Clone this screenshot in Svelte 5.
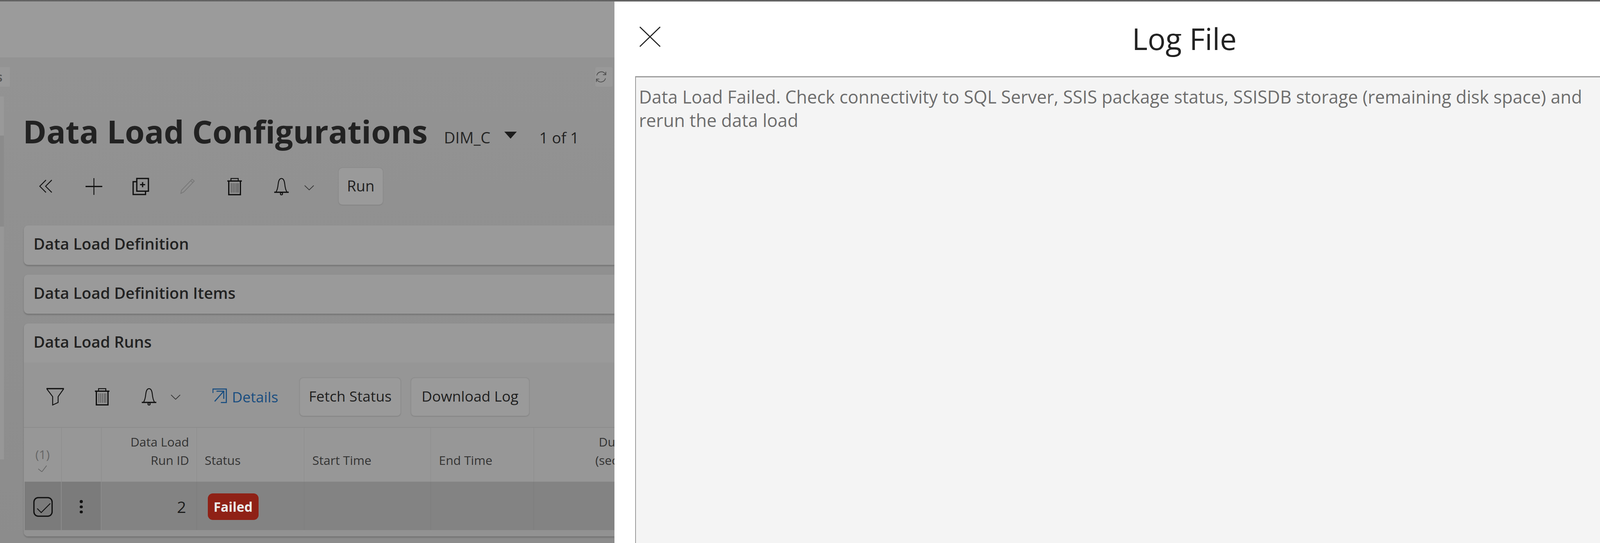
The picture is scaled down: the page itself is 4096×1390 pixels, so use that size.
<script>
  const headers = [
    { lines: ['Data Load', 'Run ID'], align: 'right' },
    { lines: ['Status'], align: 'left' },
    { lines: ['Start Time'], align: 'left' },
    { lines: ['End Time'], align: 'left' },
    { lines: ['Duration', '(seconds)'], align: 'right' }
  ];
</script>

{#snippet trash()}
  <svg class="ico" width="42" height="48" viewBox="0 0 42 48">
    <path class="thin" d="M11 8V2h20v6" />
    <path d="M1 9h40" />
    <path d="M5 9v37.5h32V9" />
    <path class="stripes" d="M12 15v26M17 15v26M22 15v26M27 15v26M31 15v26" />
  </svg>
{/snippet}

{#snippet bell()}
  <svg class="ico" width="42" height="48" viewBox="0 0 42 48">
    <path class="thin" d="M6 39c4-6 5-12 6-22 1-9 4-15 9-15s8 6 9 15c1 10 2 16 6 22" />
    <path d="M1 40h40" />
    <circle class="thin" cx="21" cy="44" r="3" />
  </svg>
{/snippet}

{#snippet chev()}
  <svg class="chev" width="27" height="14" viewBox="0 0 27 14"><path d="M1 1l12.5 12L26 1" /></svg>
{/snippet}

<div class="screen">
  <div class="topline"></div>
  <div class="main">
    <div class="left">
      <div class="band"></div>
      <div class="work">
        <div class="stubs">
          <div class="stub stub-l"><span>s</span></div>
          <div class="stub stub-r">
            <svg width="32" height="34" viewBox="0 0 32 34">
              <path d="M4 13a13 13 0 0 1 22-6l3 4M28 21a13 13 0 0 1-22 6l-3-4" />
              <path d="M29 3v8h-8M3 31v-8h8" />
            </svg>
          </div>
        </div>
        <div class="lower">
          <div class="rail"><i class="r1"></i><i class="r2"></i><i class="r3"></i></div>
          <div class="content">
            <div class="title-row">
              <h1>Data Load Configurations</h1>
              <span class="dim">DIM_C</span>
              <span class="caret"></span>
              <span class="count">1 of 1</span>
            </div>
            <div class="toolbar">
              <div class="tool first-tool">
                <svg class="ico" width="36" height="36" viewBox="0 0 36 36"><path class="thin" d="M19 1L2 18l17 17M35 1L18 18l17 17" /></svg>
              </div>
              <div class="tool">
                <svg class="ico" width="46" height="46" viewBox="0 0 46 46"><path class="thin" d="M23 0v46" /><path d="M0 23h46" /></svg>
              </div>
              <div class="tool">
                <svg class="ico" width="46" height="48" viewBox="0 0 46 48">
                  <path d="M12 2h32v35H12z" />
                  <path d="M12 11H2v35h34V37" />
                  <path d="M28 12v14M21 19h14" />
                </svg>
              </div>
              <div class="tool">
                <svg class="ico pencil" width="40" height="42" viewBox="0 0 40 42"><path d="M32 2l6 5L9 37l-8 4 2-9zM28 6l6 5" /></svg>
              </div>
              <div class="tool">{@render trash()}</div>
              <div class="tool">{@render bell()}</div>
              <div class="chev-wrap">{@render chev()}</div>
              <div class="btn run">Run</div>
            </div>

            <section class="card first"><h2>Data Load Definition</h2></section>
            <section class="card"><h2>Data Load Definition Items</h2></section>
            <section class="card runs">
              <h2>Data Load Runs</h2>
              <div class="runs-body">
                <div class="run-tools">
                  <div class="tool">
                    <svg class="ico" width="48" height="48" viewBox="0 0 48 48">
                      <path d="M0 2h48" />
                      <path class="thin" d="M1 3l16 21v23l15-7V24L47 3" />
                    </svg>
                  </div>
                  <div class="tool">{@render trash()}</div>
                  <div class="tool">{@render bell()}</div>
                  <div class="chev-wrap">{@render chev()}</div>
                  <div class="details">
                    <svg width="40" height="41" viewBox="0 0 40 41">
                      <path d="M1 13V2h37v37H23" />
                      <path d="M6 36L30 9M11 8h20v21" />
                    </svg>
                    <span>Details</span>
                  </div>
                  <div class="btn fetch">Fetch Status</div>
                  <div class="btn dl">Download Log</div>
                </div>
                <div class="table">
                  <div class="th th-check"><span>(1)</span>
                    <svg width="25" height="19" viewBox="0 0 25 19"><path d="M1 10l10 8L24 1" /></svg>
                  </div>
                  <div class="th"></div>
                  {#each headers as h}
                    <div class="th" class:right={h.align === 'right'}>
                      {#each h.lines as l}<div>{l}</div>{/each}
                    </div>
                  {/each}
                  <div class="td sel sel-first">
                    <svg width="54" height="55" viewBox="0 0 54 55">
                      <rect x="2" y="2" width="50" height="51" rx="12" />
                      <path d="M11 32l11 11 25-25" class="tick" />
                    </svg>
                  </div>
                  <div class="td sel kebab"><i></i><i></i><i></i></div>
                  <div class="td num">2</div>
                  <div class="td"><span class="badge">Failed</span></div>
                  <div class="td"></div>
                  <div class="td"></div>
                  <div class="td"></div>
                </div>
                <div class="foot"></div>
              </div>
            </section>
          </div>
        </div>
      </div>
    </div>

    <aside class="panel">
      <header class="panel-head">
        <svg class="close" width="58" height="56" viewBox="0 0 58 56"><path d="M1 1l56 54M57 1L1 55" /></svg>
        <h3>Log File</h3>
      </header>
      <div class="log">Data Load Failed. Check connectivity to SQL Server, SSIS package status, SSISDB storage (remaining disk space) and rerun the data load</div>
    </aside>
  </div>
</div>

<style>
  :global(html), :global(body) { margin: 0; overflow: hidden; background: #919191; }
  * { box-sizing: border-box; }
  .screen {
    zoom: 0.93091;
    width: 4400px;
    height: 1493px;
    overflow: hidden;
    font-family: "Open Sans", "Noto Sans", sans-serif;
    color: #222;
    display: flex;
    flex-direction: column;
  }
  .topline { height: 4px; flex: none; background: linear-gradient(#555, #777); }
  .main { flex: 1; display: flex; min-height: 0; }
  .left { width: 1690px; flex: none; overflow: hidden; display: flex; flex-direction: column; }
  .band { height: 154px; flex: none; background: #9b9b9b; }
  .work { flex: 1; background: linear-gradient(#939393, #8c8c8c); }
  .stubs { display: flex; justify-content: space-between; height: 53px; margin-top: 27px; }
  .stub { background: #999; display: flex; align-items: center; overflow: hidden; }
  .stub-l { width: 27px; justify-content: flex-end; padding-right: 20px; font-size: 34px; font-weight: 600; color: #555; }
  .stub-r { width: 47px; margin-right: 6px; justify-content: flex-start; border-radius: 4px; }
  .stub-r path { fill: none; stroke: #4d4d4d; stroke-width: 2; }
  .lower { display: flex; margin-top: 27px; }
  .rail { width: 11px; flex: none; display: flex; flex-direction: column; }
  .rail i { display: block; }
  .r1 { height: 108px; background: #999; }
  .r2 { height: 250px; background: #8b8b8b; }
  .r3 { height: 640px; background: #979797; }
  .content { flex: 1; min-width: 0; padding-left: 54px; }

  .title-row { height: 197px; padding-top: 45px; display: flex; align-items: baseline; }
  h1 { margin: 0 0 0 -2px; font-size: 87.5px; line-height: 100px; font-weight: 700; color: #222; white-space: nowrap; }
  .dim { margin-left: 45px; font-size: 43px; color: #252525; }
  .caret {
    width: 0; height: 0; margin-left: 38px; align-self: flex-start; margin-top: 52px;
    border-left: 18px solid transparent; border-right: 18px solid transparent; border-top: 20px solid #1c1c1c;
  }
  .count { margin-left: 62px; font-size: 42px; color: #222; }

  .toolbar { height: 101px; display: flex; align-items: center; margin-left: -1px; }
  .tool { width: 129px; height: 60px; display: flex; align-items: center; justify-content: center; flex: none; }
  .first-tool { width: 133px; margin-left: -3px; padding-right: 4px; }
  .ico { display: block; overflow: visible; }
  .ico path, .ico circle { fill: none; stroke: #111; stroke-width: 3.5; }
  .ico .thin, .ico circle { stroke-width: 2.5; }
  .ico .stripes { stroke: #5f5f5f; stroke-width: 2.5; }
  .pencil path { stroke: #777; stroke-width: 2; }
  .chev-wrap { width: 27px; margin-left: -2px; flex: none; display: flex; margin-top: 8px; }
  .chev path { fill: none; stroke: #333; stroke-width: 2; }
  .btn {
    display: flex; align-items: center; justify-content: center; flex: none;
    height: 105px; font-size: 40px; color: #1f1f1f; background: #9a9a9a;
    border-radius: 10px; box-shadow: 0 1px 3px rgba(0,0,0,.18);
  }
  .run { width: 122px; height: 101px; margin-left: 67px; padding-bottom: 4px; font-size: 41px; }

  .card {
    background: #9a9a9a; border-radius: 12px 0 0 12px; box-shadow: 0 3px 4px rgba(0,0,0,.2);
    margin-bottom: 27px;
  }
  .card.first { margin-top: 57px; }
  h2 {
    margin: 0; height: 108px; padding-left: 27px; font-size: 43px; font-weight: 600; line-height: 102px;
    color: #222; white-space: nowrap;
  }
  .runs-body { background: #969696; border-radius: 0 0 0 12px; }
  .runs h2 { height: 107px; }
  .run-tools { height: 177px; padding-left: 22px; display: flex; align-items: center; padding-top: 12px; }
  .run-tools .tool { margin-top: -1px; }
  .run-tools .chev-wrap { margin-left: -5px; margin-top: 2px; }
  .details { display: flex; align-items: center; gap: 14px; margin-left: 88px; color: #184d80; font-size: 40px; margin-top: 0; }
  .details path { fill: none; stroke: #184d80; stroke-width: 3; }
  .details svg { flex: none; margin-top: -6px; }
  .fetch { width: 278px; margin-left: 59px; border: 2px solid #8f8f8f; padding-bottom: 5px; }
  .dl { width: 325px; margin-left: 28px; border: 2px solid #8f8f8f; padding-bottom: 5px; }

  .table {
    display: grid;
    grid-template-columns: 105px 109px 262px 296px 348px 283px 340px;
    grid-template-rows: 149px 133px;
    border-top: 3px solid #8c8c8c;
  }
  .th {
    background: #979797; border-right: 2px solid #8b8b8b; font-size: 34px; line-height: 51px; color: #333;
    padding: 0 20px 34px 22px; display: flex; flex-direction: column; justify-content: flex-end; white-space: nowrap;
  }
  .th.right { text-align: right; }
  .th-check { align-items: center; justify-content: flex-start; padding: 52px 0 0; color: #666; line-height: 44px; font-size: 34px; }
  .th-check svg { margin-top: 7px; }
  .th-check path { fill: none; stroke: #666; stroke-width: 2; }
  .td {
    background: #838383; border-right: 2px solid #7b7b7b; display: flex; align-items: center; padding-top: 4px;
    min-width: 0;
  }
  .sel { background: #7b7b7b; border-right: 3px solid #8b8b8b; justify-content: center; }
  .sel-first { margin-left: 3px; }
  .sel rect, .sel .tick { fill: none; stroke: #111; stroke-width: 3.5; }
  .sel .tick { stroke-width: 2.5; }
  .kebab { flex-direction: column; gap: 6px; }
  .kebab i { width: 8px; height: 8px; border-radius: 50%; background: #111; display: block; }
  .num { justify-content: flex-end; padding-right: 28px; font-size: 44px; color: #1c1c1c; }
  .badge {
    margin-left: 30px; width: 140px; height: 73px; border-radius: 14px; background: #8f2116; color: #ececec;
    font-size: 36px; font-weight: 700; display: flex; align-items: center; justify-content: center;
  }
  .foot { height: 17px; background: #929292; border-radius: 0 0 0 12px; }

  .panel { flex: 1; min-width: 0; background: #fff; display: flex; flex-direction: column; }
  .panel-head { height: 205px; flex: none; position: relative; text-align: center; }
  .close { position: absolute; left: 69px; top: 69px; }
  .close path { fill: none; stroke: #222; stroke-width: 3; }
  h3 { margin: 0; padding: 46px 0 0 424px; font-size: 82px; line-height: 110px; font-weight: 400; color: #222; }
  .log {
    flex: 1; margin-left: 57px; background: #f4f4f4; border-left: 3px solid #9a9a9a; border-top: 4px solid #9a9a9a;
    padding: 22px 8px 0; font-size: 48.6px; line-height: 64px; color: #6d6d6d;
  }
</style>
